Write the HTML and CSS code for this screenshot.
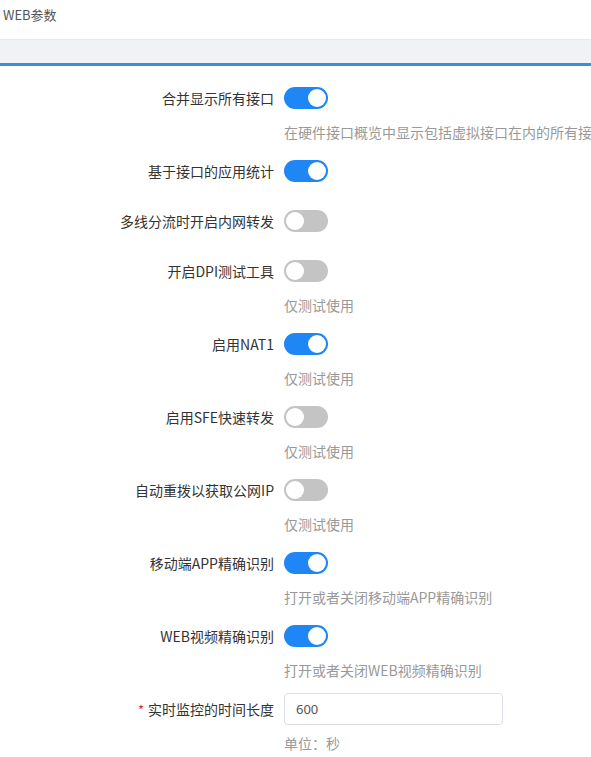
FILE: index.html
```html
<!DOCTYPE html>
<html lang="zh">
<head>
<meta charset="utf-8">
<link rel="stylesheet" href="styles.css">
</head>
<body>
<div class="title">WEB参数</div>
<div class="band"></div>
<div class="form">
  <div class="item">
    <div class="label">合并显示所有接口</div>
    <div class="ctrl"><span class="switch on"></span></div>
  </div>
  <div class="desc">在硬件接口概览中显示包括虚拟接口在内的所有接口</div>

  <div class="item">
    <div class="label">基于接口的应用统计</div>
    <div class="ctrl"><span class="switch on"></span></div>
  </div>

  <div class="item">
    <div class="label">多线分流时开启内网转发</div>
    <div class="ctrl"><span class="switch"></span></div>
  </div>

  <div class="item">
    <div class="label">开启DPI测试工具</div>
    <div class="ctrl"><span class="switch"></span></div>
  </div>
  <div class="desc">仅测试使用</div>

  <div class="item">
    <div class="label">启用NAT1</div>
    <div class="ctrl"><span class="switch on"></span></div>
  </div>
  <div class="desc">仅测试使用</div>

  <div class="item">
    <div class="label">启用SFE快速转发</div>
    <div class="ctrl"><span class="switch"></span></div>
  </div>
  <div class="desc">仅测试使用</div>

  <div class="item">
    <div class="label">自动重拨以获取公网IP</div>
    <div class="ctrl"><span class="switch"></span></div>
  </div>
  <div class="desc">仅测试使用</div>

  <div class="item">
    <div class="label">移动端APP精确识别</div>
    <div class="ctrl"><span class="switch on"></span></div>
  </div>
  <div class="desc">打开或者关闭移动端APP精确识别</div>

  <div class="item">
    <div class="label">WEB视频精确识别</div>
    <div class="ctrl"><span class="switch on"></span></div>
  </div>
  <div class="desc">打开或者关闭WEB视频精确识别</div>

  <div class="item">
    <div class="label"><span class="req">*</span>实时监控的时间长度</div>
    <div class="ctrl"><input class="input" type="text" value="600"></div>
  </div>
  <div class="desc">单位：秒</div>
</div>
</body>
</html>
```
FILE: styles.css
```css
html, body {
  margin: 0;
  padding: 0;
  background: #fff;
  font-family: "Noto Sans CJK SC", "Noto Sans", sans-serif;
  overflow: hidden;
}
.title {
  height: 40px;
  box-sizing: border-box;
  padding: 5px 0 0 3px;
  font-size: 13px;
  line-height: 20px;
  color: #555;
  border-bottom: 1px solid #e8e9ec;
}
.band {
  height: 23px;
  background: #f0f2f5;
  border-bottom: 3px solid #3a8fd9;
}
.form {
  padding-top: 16px;
}
.item {
  display: flex;
  align-items: center;
  height: 32px;
  margin-bottom: 18px;
}
.label {
  width: 274px;
  flex: none;
  text-align: right;
  font-size: 14px;
  color: #333;
  white-space: nowrap;
  padding-right: 10px;
  box-sizing: content-box;
}
.req {
  color: #d0342c;
  margin-right: 4px;
  font-size: 13px;
}
.ctrl {
  display: flex;
  align-items: center;
}
.switch {
  display: block;
  position: relative;
  width: 44px;
  height: 22px;
  border-radius: 11px;
  background: #c4c4c4;
}
.switch::after {
  content: "";
  position: absolute;
  top: 2px;
  left: 2px;
  width: 18px;
  height: 18px;
  border-radius: 50%;
  background: #fff;
}
.switch.on {
  background: #1e86f5;
}
.switch.on::after {
  left: 24px;
}
.desc {
  margin: -10px 0 13px 284px;
  font-size: 14px;
  line-height: 20px;
  color: #999;
  white-space: nowrap;
}
.input {
  width: 219px;
  height: 32px;
  box-sizing: border-box;
  border: 1px solid #dcdfe6;
  border-radius: 4px;
  padding: 0 11px;
  font-family: "Noto Sans", sans-serif;
  font-size: 13px;
  color: #555;
  outline: none;
}
```
